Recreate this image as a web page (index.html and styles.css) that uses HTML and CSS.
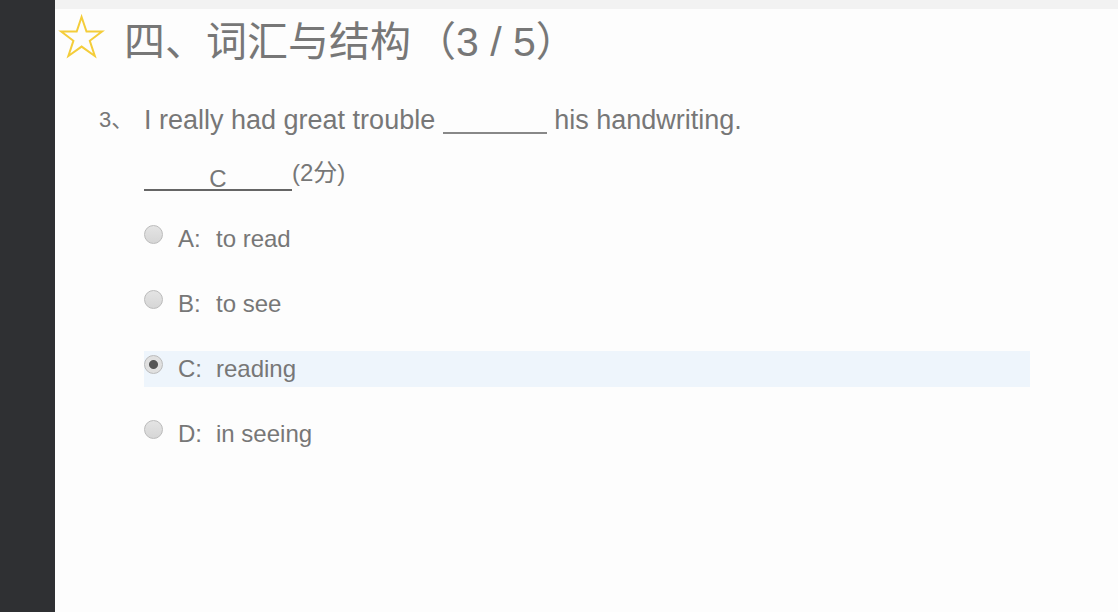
FILE: index.html
```html
<!DOCTYPE html>
<html lang="zh-CN">
<head>
<meta charset="utf-8">
<meta name="viewport" content="width=device-width, initial-scale=1">
<title>四、词汇与结构</title>
<link rel="stylesheet" href="styles.css">
</head>
<body>
<div class="layout">
  <aside class="rail"></aside>
  <main class="page">
    <header class="section-head">
      <svg class="star" viewBox="0 0 48 48" aria-hidden="true">
        <path d="M23.6 5 L28.5 19.6 L44 19.6 L31.8 28.8 L36.8 44 L23.6 34.6 L10.4 44 L15.4 28.8 L3.2 19.6 L18.7 19.6 Z"/>
      </svg>
      <h1 class="title">四、词汇与结构<span class="progress">（3 / 5）</span></h1>
    </header>
    <section class="question">
      <span class="number">3、</span>
      <div class="body">
        <p class="prompt" id="prompt">I really had great trouble <span class="gap"></span> his handwriting.</p>
        <p class="answer"><span class="chosen">C</span><span class="score">(2分)</span></p>
        <div class="options" role="radiogroup" aria-labelledby="prompt">
          <label class="option"><input class="radio" type="radio" name="answer"><span class="letter">A:</span><span>to read</span></label>
          <label class="option"><input class="radio" type="radio" name="answer"><span class="letter">B:</span><span>to see</span></label>
          <label class="option"><input class="radio" type="radio" name="answer" checked><span class="letter">C:</span><span>reading</span></label>
          <label class="option"><input class="radio" type="radio" name="answer"><span class="letter">D:</span><span>in seeing</span></label>
        </div>
      </div>
    </section>
  </main>
</div>
</body>
</html>
```
FILE: styles.css
```css
* {
  box-sizing: border-box;
}

body {
  margin: 0;
  background: #fdfdfd;
  color: #777;
  font-family: "Liberation Sans", "Noto Sans CJK SC", sans-serif;
}

.layout {
  display: flex;
  min-height: 100vh;
}

.rail {
  flex: 0 0 55px;
  background: #2f3033;
}

.page {
  flex: 1;
  border-top: 9px solid #f2f2f2;
}

.section-head {
  display: flex;
  align-items: flex-start;
  gap: 18px;
  padding: 3px 0 0 3px;
}

.star {
  width: 48px;
  height: 48px;
  fill: none;
  stroke: #f4cd3a;
  stroke-width: 2;
}

.title {
  margin: 0;
  font-size: 41px;
  line-height: 60px;
  font-weight: 400;
}

.progress {
  margin-left: 4px;
}

.question {
  display: flex;
  padding: 28px 88px 0 44px;
}

.number {
  flex: 0 0 45px;
  font-size: 22px;
  line-height: 40px;
}

.body {
  flex: 1;
}

.prompt {
  margin: 0;
  font-size: 27px;
  line-height: 40px;
}

.gap {
  display: inline-block;
  width: 104px;
  height: 8px;
  border-bottom: 2px solid #888;
  vertical-align: -5px;
}

.answer {
  display: flex;
  align-items: flex-start;
  margin: 13px 0 0;
  font-size: 24px;
  line-height: 40px;
}

.chosen {
  width: 148px;
  margin-top: 16px;
  border-bottom: 2px solid #666;
  line-height: 20px;
  text-align: center;
}

.options {
  display: flex;
  flex-direction: column;
  gap: 29px;
  margin-top: 28px;
}

.option {
  display: flex;
  font-size: 24px;
  line-height: 36px;
}

.option:has(:checked) {
  background: #eef5fc;
}

.radio {
  appearance: none;
  width: 19px;
  height: 19px;
  margin: 4px 15px 0 0;
  border: 1px solid #bbb;
  border-radius: 50%;
  background: linear-gradient(#e4e4e4, #d6d6d6);
}

.radio:checked {
  background: radial-gradient(circle, #555 0 4px, #e0e0e0 5px);
}

.letter {
  width: 38px;
}
```
